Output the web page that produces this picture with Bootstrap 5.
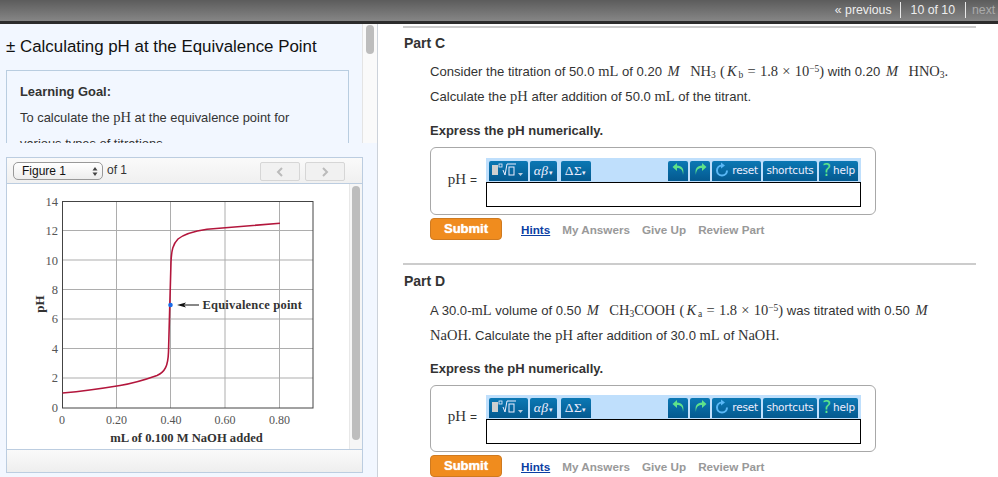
<!DOCTYPE html>
<html lang="en"><head><meta charset="utf-8"><title>Calculating pH</title>
<link href="https://cdn.jsdelivr.net/npm/bootstrap@5.3.0/dist/css/bootstrap.min.css" rel="stylesheet">
<style>
html,body{height:477px;overflow:hidden;background:#fff}
body{font-family:"Liberation Sans",Arial,sans-serif;font-size:12px;color:#333;width:998px}
.topbar{height:24px;background:linear-gradient(#5c5c5c,#858585 86%,#2c2c2c 88%,#2c2c2c);color:#eee;font-size:12.3px;padding-top:2px;line-height:16px;white-space:nowrap}
.topbar span{padding:0 8px;border-right:1px solid #e8e8e8;height:16px}
.topbar .cnt{padding:0 10px}
.topbar .nx{border:0;color:#aaa;padding:0 0 0 6px;width:32px}
.shell{height:453px}
.leftpane{width:378px;background:#f2f7ff;border-right:1px solid #ccd2da;height:453px;overflow:hidden;flex:none}
.intro{height:119px;overflow:hidden}
.introbody{width:362px;height:119px;padding:0 13px 0 6px;overflow:hidden}
.vbar{width:15px;background:#fafafa;border-left:1px solid #e4e4e4;padding:1px 3px}
.vthumb{width:8px;height:29px;border-radius:4px;background:#bdbdbd}
.ttl{font-size:16.9px;line-height:22px;color:#111;margin:12px 0 12px}
.goal{border:1px solid #b9cde0;height:90px;padding:8px 30px 0 13px;line-height:26px;font-size:12.9px}
.goal b{display:block;color:#333;line-height:25px}
.figwrap{padding:14px 14px 0 6px;background:#f2f7ff;height:334px}
.figpanel{border:1px solid #bccde0;height:316px;background:#fff}
.figtools{height:26px;background:linear-gradient(#fafafa,#f0f0f0);border-bottom:1px solid #bccde0;padding:4px 17px 0 6px;font-size:12px}
.fsel{width:90px;height:18px;border:1px solid #999;border-radius:5px;background:linear-gradient(#fff,#ededed);padding:0 4px 0 8px;line-height:16px;color:#111}
.pgbtn{width:40px;height:19px;border:1px solid #d6d6d6;border-radius:2px;background:#f1f1f1;padding:0;margin-left:5px;line-height:0}
.figmid{height:265px}
.figmid svg{display:block;width:342px;height:265px;flex:none}
.ibar{width:14px;background:#f6f6f6;border-left:1px solid #e8e8e8;padding:2px 2px}
.ithumb{width:8px;height:254px;border-radius:4px;background:#bdbdbd}
.figfoot{height:23px;border-top:1px solid #bccde0;background:linear-gradient(#fafafa,#eee)}
.rightpane{padding:2px 0 0 25px;width:620px}
.rule{border-top:2px solid #ccc;width:573px;margin:0}
.ph{font-size:14px;font-weight:700;color:#333;line-height:18px;margin:6px 0 0 1px}
.qtxt{margin:7px 0 0 27px;font-size:13.1px;line-height:25px;color:#333;white-space:nowrap}
.m{font-family:"Liberation Serif",serif;font-size:14.5px;word-spacing:.6px}
.m i{margin:0 2px}
.m sub,.m sup{font-size:9.5px}
.m sub{bottom:-.2em}.m sup{top:-.45em}
.ask{margin:13px 0 0 27px;font-size:13px;font-weight:700;line-height:18px}
.ansbox{margin:7px 0 0 27px;width:446px;height:68px;border:1px solid #a8a8a8;border-radius:6px;padding:9px 14px 0 0}
.lbl{width:55px;text-align:right;padding:0 9px 0 0;font-family:"Liberation Serif",serif;font-size:15px;margin-top:10px}
.lbl em{font-style:normal;font-family:"Liberation Sans";font-size:12px}
.mq{width:376px}
.mqbar{height:24px;background:#bfdffc;padding:3px 3px 0;gap:2px}
.mqbtn{height:20px;background:linear-gradient(#0b78b4,#04598f);border-radius:2px 2px 0 0;color:#eef;font-size:10.5px;line-height:19px;text-align:center;white-space:nowrap;font-family:"DejaVu Sans",sans-serif;letter-spacing:-.2px}
.mqbtn svg{vertical-align:-3px}
.w39{width:39px}.w27{width:27px}.w30{width:30px;margin-left:2px}.w20{width:20px}.w49{width:49px}.w54{width:54px}
.serif{font-family:"Liberation Serif",serif;font-size:13.5px;letter-spacing:.5px}
.grn{color:#5fe28a;font-size:17px;vertical-align:-2px;margin-right:2px}
.mqin{height:25px;border:1.5px solid #000;background:#fff;width:375px}
.actions{margin:3px 0 0 27px}
.subbtn{width:72px;height:22px;padding:0;background:#f08c1e;border:1px solid #cf7a20;border-radius:4px;color:#fff;font-weight:700;font-size:13px;line-height:20px;text-shadow:0 0 1px #fff}
.alinks{margin-left:19px;gap:12px;font-size:11.7px;font-weight:700;color:#999;padding-top:1px}
.alinks a{color:#0b3ea3}
.gap2nd{margin-top:23px}
.gap2nd+.ph{margin-top:7px}
.partc .ansbox{padding-top:10px}
.partd .qtxt{margin-top:8px}
.partd .ask{margin-top:12px}
.partd .ansbox{margin-top:7px;height:67px}
</style></head><body>
<div class="topbar d-flex justify-content-end"><span class="pv">« previous</span><span class="cnt">10 of 10</span><span class="nx">next</span></div>
<div class="shell d-flex">
<div class="leftpane">
 <div class="intro d-flex">
  <div class="introbody">
   <div class="ttl">± Calculating pH at the Equivalence Point</div>
   <div class="goal"><b>Learning Goal:</b>To calculate the <span class="m">pH</span> at the equivalence point for various types of titrations.</div>
  </div>
  <div class="vbar"><div class="vthumb"></div></div>
 </div>
 <div class="figwrap">
  <div class="figpanel">
   <div class="figtools d-flex align-items-start">
    <div class="fsel d-flex justify-content-between align-items-center">Figure 1<svg width="6" height="11" viewBox="0 0 6 11"><path d="M3 1 5.500 4.500H.5ZM3 10 .5 6.500h5Z" fill="#444"/></svg></div>
    <div class="ms-1" style="line-height:17px">of 1</div>
    <div class="ms-auto d-flex">
     <button class="pgbtn" aria-label="previous"><svg width="8" height="10" viewBox="0 0 8 10"><path d="M6 1 2 5l4 4" fill="none" stroke="#bbb" stroke-width="2"/></svg></button>
     <button class="pgbtn" aria-label="next"><svg width="8" height="10" viewBox="0 0 8 10"><path d="M2 1l4 4-4 4" fill="none" stroke="#bbb" stroke-width="2"/></svg></button>
    </div>
   </div>
   <div class="figmid d-flex">
    <svg viewBox="7 184 342 265" font-family="Liberation Serif, serif">
     <path d="M116.500 202V408M170.500 202V408M225 202V408M279.500 202V408M63 230.500H313M63 260H313M63 289.500H313M63 319H313M63 348.500H313M63 378H313" stroke="#adadad" fill="none"/>
     <rect x="62.500" y="201.500" width="250.500" height="206.500" fill="none" stroke="#444"/>
     <g font-size="12.5" fill="#555" text-anchor="end">
      <text x="58" y="206">14</text><text x="58" y="235">12</text><text x="58" y="265">10</text><text x="58" y="294">8</text><text x="58" y="323">6</text><text x="58" y="353">4</text><text x="58" y="382">2</text><text x="58" y="412">0</text>
     </g>
     <g font-size="12" fill="#555" text-anchor="middle">
      <text x="62" y="424">0</text><text x="116.500" y="424">0.20</text><text x="171" y="424">0.40</text><text x="225" y="424">0.60</text><text x="279.500" y="424">0.80</text>
     </g>
     <text x="186.500" y="441.500" font-size="12.6" font-weight="700" fill="#333" text-anchor="middle">mL of 0.100 M NaOH added</text>
     <text transform="translate(44 304) rotate(-90)" font-size="13" font-weight="700" fill="#333" text-anchor="middle">pH</text>
     <path d="M62.500 393C85 391 105 388 120 385.500S150 378 157 375.500C165 372 168 366 168.500 352C169.500 325 170 290 171 262C171.500 250 173 244 178 239C184 234 195 231 207 229.200L280 223.300" fill="none" stroke="#b3163c" stroke-width="1.6"/>
     <path d="M177 305L186 302.500L184 305L186 307.500Z" fill="#111"/>
     <path d="M184 305H199" stroke="#111"/>
     <circle cx="170.500" cy="305" r="2.300" fill="#1a6be8"/>
     <text x="202.500" y="309" font-size="12.5" font-weight="700" fill="#333" letter-spacing=".2">Equivalence point</text>
    </svg>
    <div class="ibar"><div class="ithumb"></div></div>
   </div>
   <div class="figfoot"></div>
  </div>
 </div>
</div>
<div class="rightpane">
 <hr class="rule opacity-100">
 <div class="ph">Part C</div>
 <div class="partc">
 <p class="qtxt mb-0">Consider the titration of 50.0 <span class="m">mL</span> of 0.20 <span class="m"><i>M</i> &nbsp;NH<sub>3</sub> (<i>K</i><sub>b</sub> = 1.8 × 10<sup>−5</sup>)</span> with 0.20 <span class="m"><i>M</i> &nbsp;HNO<sub>3</sub>.</span><br>Calculate the <span class="m">pH</span> after addition of 50.0 <span class="m">mL</span> of the titrant.</p>
 <div class="ask">Express the pH numerically.</div>
 <div class="ansbox d-flex">
  <div class="lbl">pH <em>=</em></div>
  <div class="mq">
   <div class="mqbar d-flex">
    <div class="mqbtn w39"><svg width="36" height="17" viewBox="0 0 36 17"><rect x="2" y="4" width="6" height="10" fill="#cfcfcf"/><rect x="9" y="3" width="3" height="3" fill="none" stroke="#eef" stroke-width=".8"/><path d="M13 9l2 5 2-11h9" fill="none" stroke="#eef"/><rect x="19" y="6" width="5" height="8" fill="none" stroke="#eef"/><path d="M28 12h5l-2.500 3Z" fill="#bcd"/></svg></div>
    <div class="mqbtn w27 serif"><i>αβ</i><small style="font-size:7px">▾</small></div>
    <div class="mqbtn w30 serif">ΔΣ<small style="font-size:7px">▾</small></div>
    <div class="mqbtn w20 ms-auto"><svg width="15" height="15" viewBox="0 0 15 15"><path d="M12 13C12 7 9 6 6 6V9L1.500 5 6 1V3.500C11 3.500 13.500 7 12 13Z" fill="#5fe28a"/></svg></div>
    <div class="mqbtn w20"><svg width="15" height="15" viewBox="0 0 15 15"><path d="M3 13C3 7 6 6 9 6V9L13.500 5 9 1V3.500C4 3.500 1.500 7 3 13Z" fill="#5fe28a"/></svg></div>
    <div class="mqbtn w49"><svg width="14" height="15" viewBox="0 0 14 15"><path d="M7 3.500A5 5 0 1 0 12 8.500" fill="none" stroke="#59b7f5" stroke-width="2"/><path d="M6 .5 10 3.500 6 6.500Z" fill="#59b7f5"/></svg> reset</div>
    <div class="mqbtn w54">shortcuts</div>
    <div class="mqbtn w39"><span class="grn">?</span>help</div>
   </div>
   <div class="mqin"></div>
  </div>
 </div>
 <div class="actions d-flex align-items-center">
  <button class="subbtn">Submit</button>
  <div class="alinks d-flex"><a href="#">Hints</a><span>My Answers</span><span>Give Up</span><span>Review Part</span></div>
 </div>
 </div>
 <hr class="rule opacity-100 gap2nd">
 <div class="ph">Part D</div>
 <div class="partd">
 <p class="qtxt mb-0">A 30.0-<span class="m">mL</span> volume of 0.50 <span class="m"><i>M</i> &nbsp;CH<sub>3</sub>COOH (<i>K</i><sub>a</sub> = 1.8 × 10<sup>−5</sup>)</span> was titrated with 0.50 <span class="m"><i>M</i></span><br><span class="m">NaOH.</span> Calculate the <span class="m">pH</span> after addition of 30.0 <span class="m">mL</span> of <span class="m">NaOH.</span></p>
 <div class="ask">Express the pH numerically.</div>
 <div class="ansbox d-flex">
  <div class="lbl">pH <em>=</em></div>
  <div class="mq">
   <div class="mqbar d-flex">
    <div class="mqbtn w39"><svg width="36" height="17" viewBox="0 0 36 17"><rect x="2" y="4" width="6" height="10" fill="#cfcfcf"/><rect x="9" y="3" width="3" height="3" fill="none" stroke="#eef" stroke-width=".8"/><path d="M13 9l2 5 2-11h9" fill="none" stroke="#eef"/><rect x="19" y="6" width="5" height="8" fill="none" stroke="#eef"/><path d="M28 12h5l-2.500 3Z" fill="#bcd"/></svg></div>
    <div class="mqbtn w27 serif"><i>αβ</i><small style="font-size:7px">▾</small></div>
    <div class="mqbtn w30 serif">ΔΣ<small style="font-size:7px">▾</small></div>
    <div class="mqbtn w20 ms-auto"><svg width="15" height="15" viewBox="0 0 15 15"><path d="M12 13C12 7 9 6 6 6V9L1.500 5 6 1V3.500C11 3.500 13.500 7 12 13Z" fill="#5fe28a"/></svg></div>
    <div class="mqbtn w20"><svg width="15" height="15" viewBox="0 0 15 15"><path d="M3 13C3 7 6 6 9 6V9L13.500 5 9 1V3.500C4 3.500 1.500 7 3 13Z" fill="#5fe28a"/></svg></div>
    <div class="mqbtn w49"><svg width="14" height="15" viewBox="0 0 14 15"><path d="M7 3.500A5 5 0 1 0 12 8.500" fill="none" stroke="#59b7f5" stroke-width="2"/><path d="M6 .5 10 3.500 6 6.500Z" fill="#59b7f5"/></svg> reset</div>
    <div class="mqbtn w54">shortcuts</div>
    <div class="mqbtn w39"><span class="grn">?</span>help</div>
   </div>
   <div class="mqin"></div>
  </div>
 </div>
 <div class="actions d-flex align-items-center">
  <button class="subbtn">Submit</button>
  <div class="alinks d-flex"><a href="#">Hints</a><span>My Answers</span><span>Give Up</span><span>Review Part</span></div>
 </div>
 </div>
</div>
</div>
</body></html>
